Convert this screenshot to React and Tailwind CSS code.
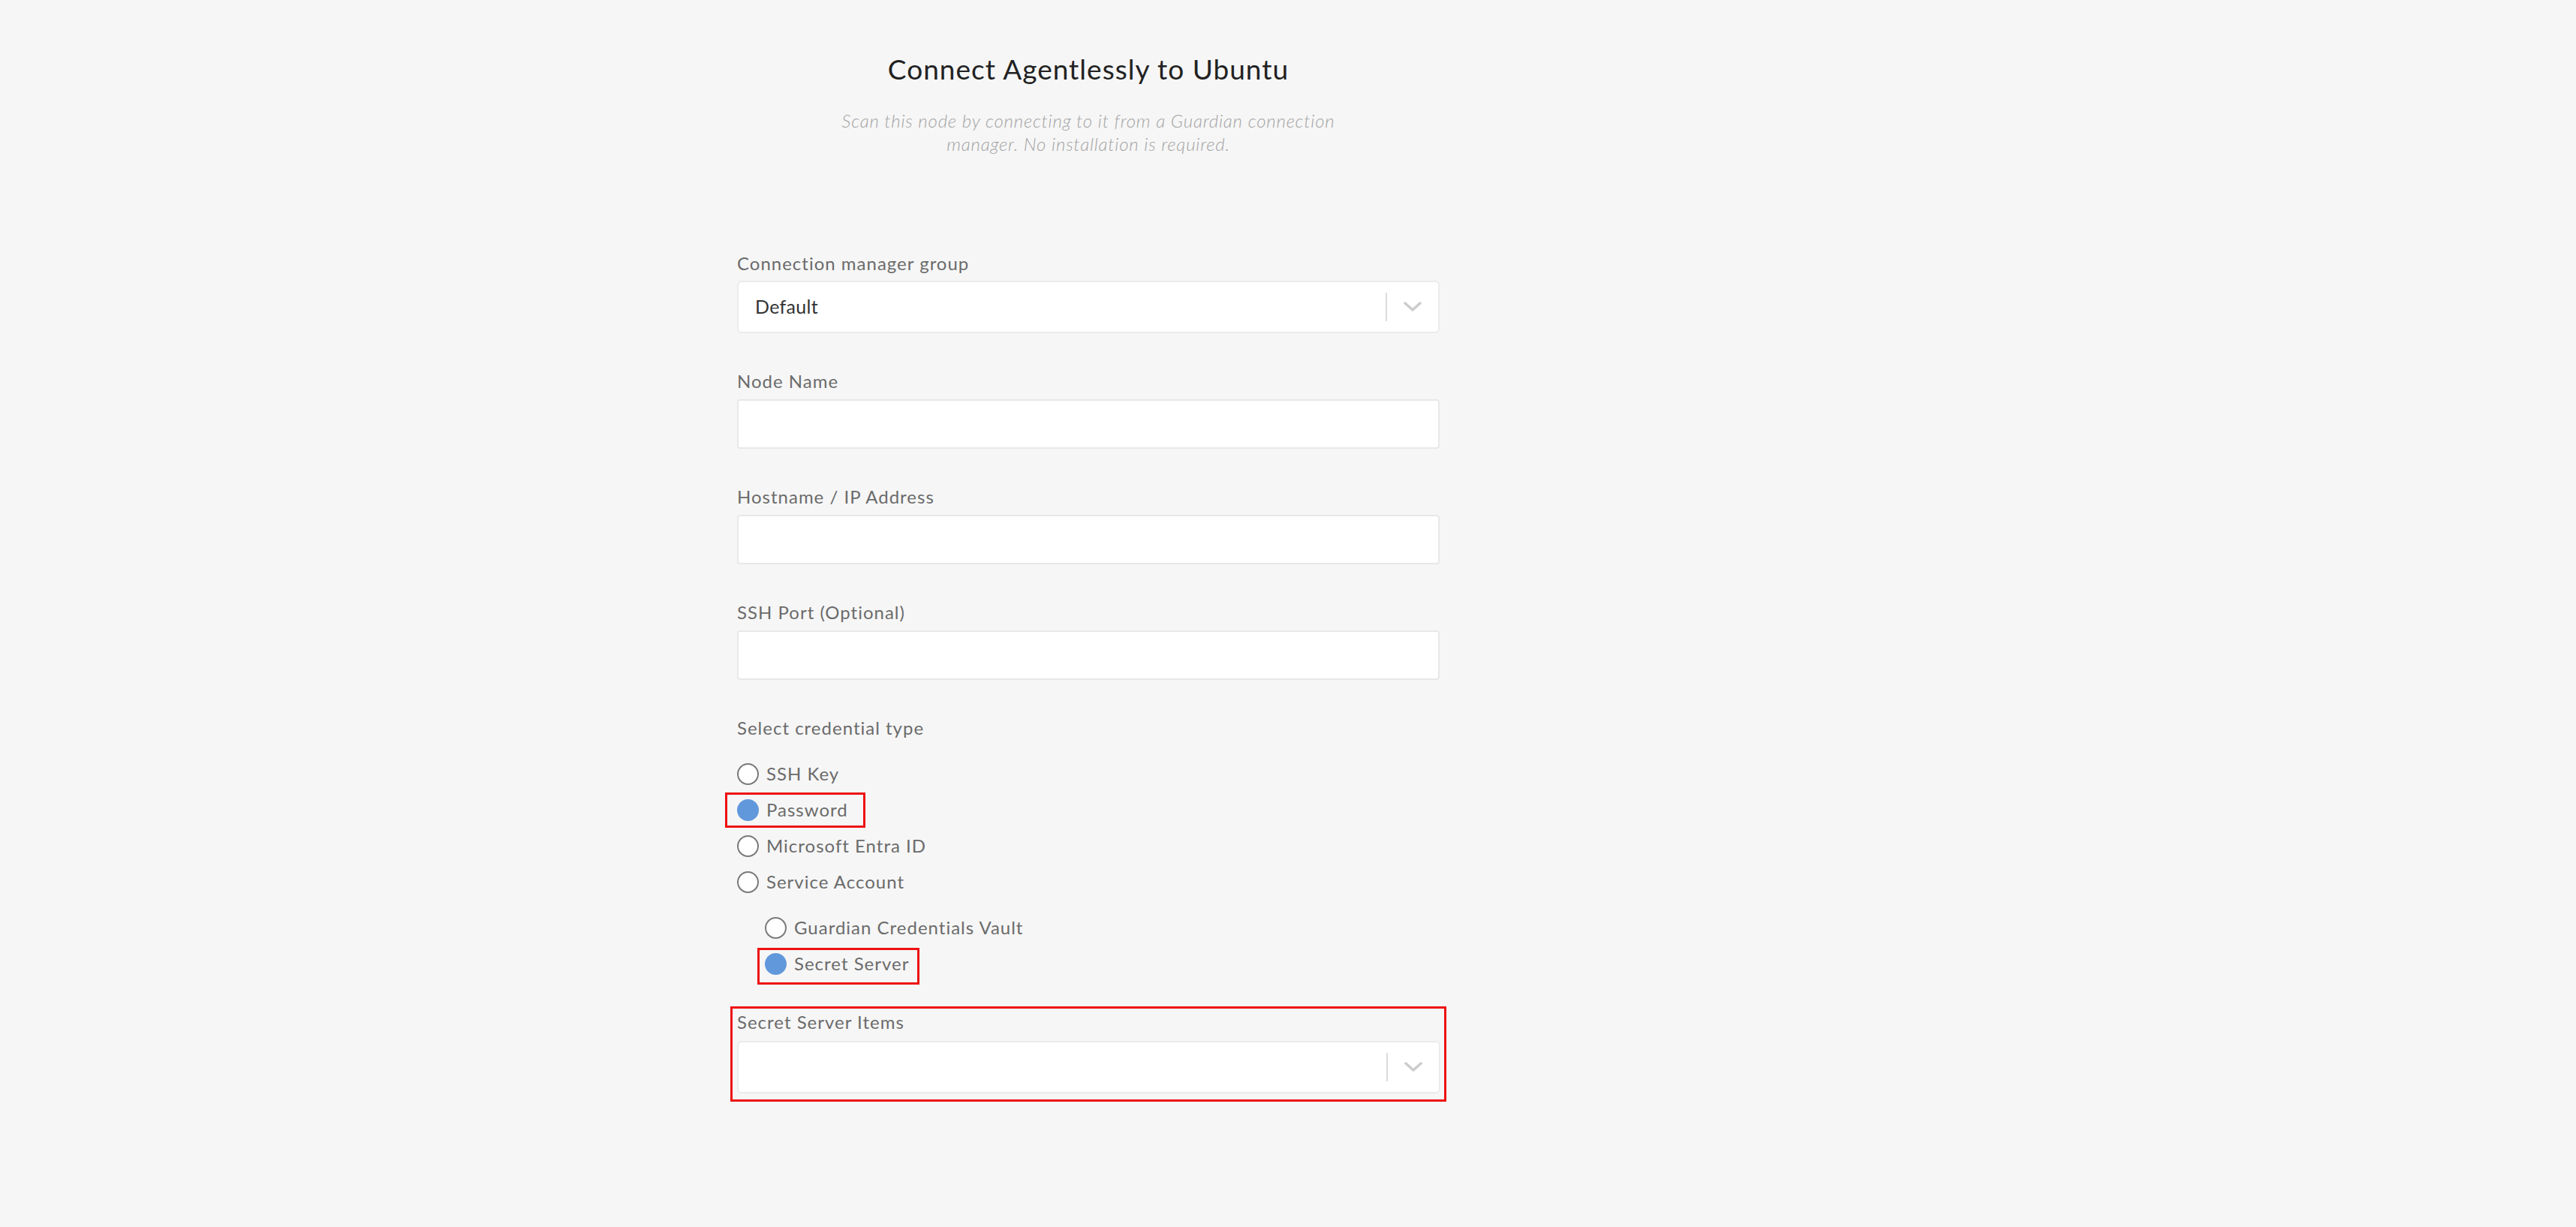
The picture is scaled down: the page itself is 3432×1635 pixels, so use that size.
import React from 'react';

const font = { fontFamily: 'Lato, "Open Sans", sans-serif' };

const Chevron = () => (
  <svg width="24" height="14" viewBox="0 0 24 14" fill="none">
    <path d="M2 2l10 9 10-9" stroke="#cccccc" strokeWidth="3.5" strokeLinecap="round" strokeLinejoin="round" />
  </svg>
);

const Select = ({ value }) => (
  <div className="flex items-center h-[70px] bg-white border-2 border-[#ebebeb] rounded-[6px]">
    <div className="flex-1 pl-[22px] text-[25px] tracking-[0.3px] text-[#333333]">{value}</div>
    <div className="w-[2px] h-[38px] bg-[#dcdcdc]" />
    <div className="w-[68px] flex items-center justify-center">
      <Chevron />
    </div>
  </div>
);

const Field = ({ label, children, first }) => (
  <div className={first ? '' : 'mt-[49px]'}>
    <label className="block text-[24px] leading-[29px] tracking-[1px] text-[#6b6b6b] mb-[10px]">{label}</label>
    {children}
  </div>
);

const TextInput = () => (
  <div className="h-[66px] bg-white border-2 border-[#e8e8e8] rounded-[4px]" />
);

const Radio = ({ label, checked, box }) => (
  <div className="relative flex items-center h-[48px]">
    {checked ? (
      <span className="w-[29px] h-[29px] rounded-full bg-[#6198db]" />
    ) : (
      <span className="w-[29px] h-[29px] rounded-full border-2 border-[#7a7a7a] bg-white" />
    )}
    <span className="ml-[10px] text-[24px] tracking-[1px] text-[#6b6b6b]">{label}</span>
    {box && <span className={`absolute border-[3px] border-[#ee1111] ${box}`} />}
  </div>
);

export default function App() {
  return (
    <div className="min-h-screen bg-[#f6f6f6]" style={font}>
      <div className="w-[2900px] pt-[70px] pb-[120px]">
        <h1 className="text-center text-[37px] leading-[44px] tracking-[1px] text-[#222222]">Connect Agentlessly to Ubuntu</h1>
        <p className="mx-auto mt-[31px] w-[720px] text-center text-[24px] leading-[31px] tracking-[0.8px] italic font-light text-[#a3a3a3]">
          Scan this node by connecting to it from a Guardian connection manager. No installation is required.
        </p>

        <div className="mx-auto mt-[129px] w-[936px]">
          <Field label="Connection manager group" first>
            <div className="-mt-[1px]">
              <Select value="Default" />
            </div>
          </Field>
          <Field label="Node Name">
            <TextInput />
          </Field>
          <Field label="Hostname / IP Address">
            <TextInput />
          </Field>
          <Field label="SSH Port (Optional)">
            <TextInput />
          </Field>

          <div className="mt-[49px]">
            <div className="text-[24px] leading-[29px] tracking-[1px] text-[#6b6b6b]">Select credential type</div>
            <div className="mt-[23px]">
              <Radio label="SSH Key" />
              <Radio label="Password" checked box="-left-[16px] top-[1px] w-[187px] h-[47px]" />
              <Radio label="Microsoft Entra ID" />
              <Radio label="Service Account" />
              <div className="mt-[13px] pl-[37px]">
                <Radio label="Guardian Credentials Vault" />
                <Radio label="Secret Server" checked box="-left-[10px] top-[3px] w-[216px] h-[49px]" />
              </div>
            </div>
          </div>

          <div className="-mx-[9px] mt-[33px] border-[3px] border-[#ee1111] pl-[6px] pr-[5px] pt-[3px] pb-[8px]">
            <label className="block text-[24px] leading-[29px] tracking-[1px] text-[#6b6b6b] mb-[11px]">Secret Server Items</label>
            <Select value="" />
          </div>
        </div>
      </div>
    </div>
  );
}
